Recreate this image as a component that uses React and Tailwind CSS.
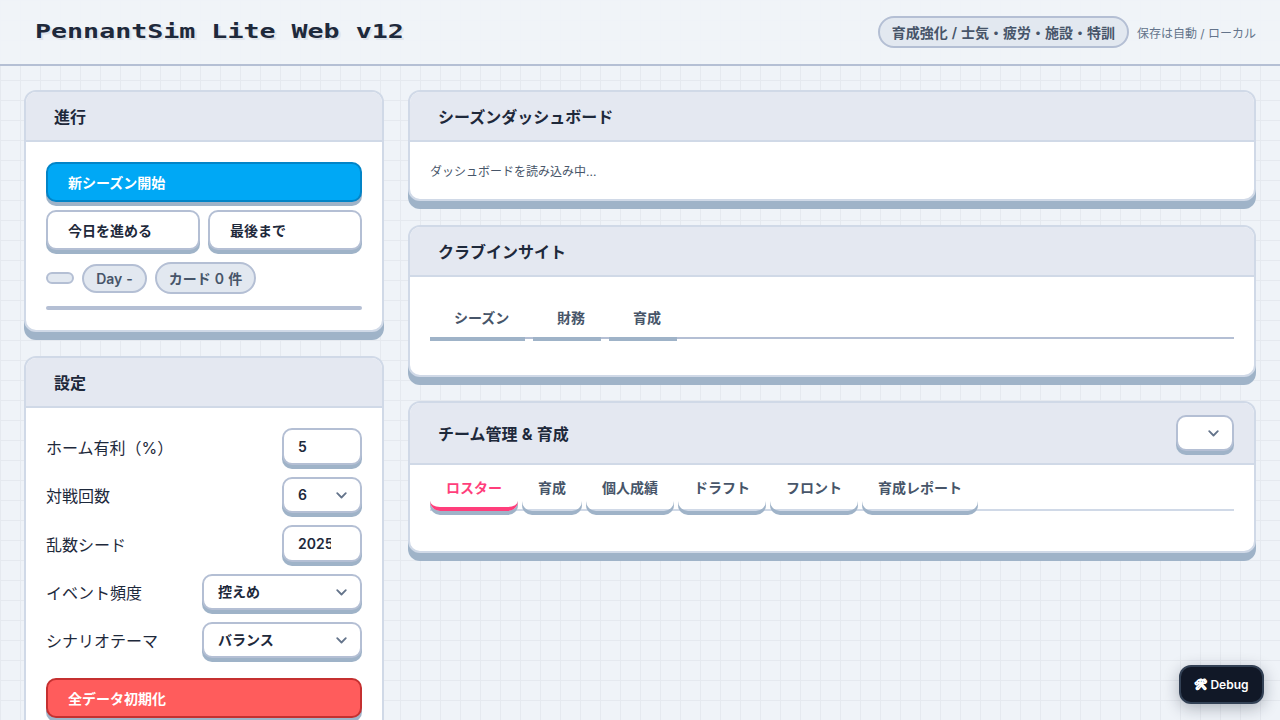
import React from "react";

function Card({ title, action, headerClass = "h-[50px]", className = "", children }) {
  return (
    <section className={`flex flex-col overflow-hidden rounded-xl border-2 border-[#d0d9e7] bg-white shadow-[0_8px_0_#9fb3c8] ${className}`}>
      <div className={`flex shrink-0 items-center justify-between border-b-2 border-[#d0d9e7] bg-[#e4e8f1] pl-7 pr-5 ${headerClass}`}>
        <h2 className="pt-0.5 text-base font-bold [word-spacing:0.5px]">{title}</h2>
        {action}
      </div>
      {children}
    </section>
  );
}

function Button({ children, className }) {
  return (
    <button className={`flex h-10 items-center rounded-[10px] border-2 pl-5 pt-0.5 text-left text-sm font-bold shadow-[0_4px_0_#9fb3c8] ${className}`}>
      {children}
    </button>
  );
}

function Chip({ children, className = "" }) {
  return (
    <span className={`flex items-center justify-center whitespace-nowrap rounded-full border-2 border-[#b4bfd4] bg-[#e2e8f0] text-sm font-semibold text-[#475569] [word-spacing:0.5px] ${className}`}>
      {children}
    </span>
  );
}

function SelectBox({ children, className }) {
  return (
    <div className={`flex h-9 items-center justify-between rounded-[10px] border-2 border-[#b4bfd4] bg-white pl-3.5 pr-2.5 text-sm font-semibold shadow-[0_4px_0_#9fb3c8] ${className}`}>
      <span>{children}</span>
      <svg className="h-4 w-4" viewBox="0 0 16 16" fill="none" stroke="#64748b" strokeWidth="1.8" strokeLinecap="round" strokeLinejoin="round">
        <path d="M3.2 6.2 7.5 10.5 11.8 6.2" />
      </svg>
    </div>
  );
}

function NumberBox({ children }) {
  return (
    <div className="flex h-[37px] w-20 items-center rounded-[10px] border-2 border-[#b4bfd4] bg-white pl-3.5 text-sm font-semibold shadow-[0_4px_0_#9fb3c8]">
      <span className="w-[33px] overflow-hidden">{children}</span>
    </div>
  );
}

function Row({ label, children }) {
  return (
    <div className="flex items-center justify-between">
      <span className="pt-0.5 text-base leading-6">{label}</span>
      {children}
    </div>
  );
}

const insightTabs = [
  { name: "シーズン", width: "w-[95px]" },
  { name: "財務", width: "w-[68px]" },
  { name: "育成", width: "w-[68px]" },
];

const teamTabs = ["ロスター", "育成", "個人成績", "ドラフト", "フロント", "育成レポート"];

export default function App() {
  return (
    <div className="relative h-screen overflow-hidden bg-[#eff3f8] bg-[linear-gradient(to_right,#e5e9ef_1px,transparent_1px),linear-gradient(to_bottom,#e5e9ef_1px,transparent_1px)] bg-[size:20px_20px] font-[Inter,'Noto_Sans_CJK_JP',sans-serif] text-[#1e293b]">
      <header className="flex h-[66px] items-center justify-between border-b-2 border-[#b4bfd4] bg-[#eff3f8]/95 pl-[35px] pr-6">
        <h1 className="origin-left scale-x-[1.388] whitespace-nowrap font-['DejaVu_Sans_Mono',monospace] text-[19.2px] font-bold leading-6 [text-shadow:1.5px_2px_0_#dfe4eb]">PennantSim Lite Web v12</h1>
        <div className="flex items-center gap-2">
          <Chip className="h-8 w-[251px] pt-px">育成強化 / 士気・疲労・施設・特訓</Chip>
          <span className="pt-[3px] text-xs text-[#64748b]">保存は自動 / ローカル</span>
        </div>
      </header>

      <main className="grid grid-cols-[360px_848px] items-start gap-6 px-6 pt-6">
        <div className="flex flex-col gap-6">
          <Card title="進行" className="h-[242px]">
            <div className="flex flex-col p-5">
              <Button className="border-[#0284c7] bg-[#00a8f5] text-white">新シーズン開始</Button>
              <div className="mt-2 grid grid-cols-2 gap-2">
                <Button className="border-[#b4bfd4] bg-white">今日を進める</Button>
                <Button className="border-[#b4bfd4] bg-white">最後まで</Button>
              </div>
              <div className="mt-3 flex h-8 items-center gap-2">
                <Chip className="h-3 w-7" />
                <Chip className="h-[29px] w-[65px] pt-px">Day -</Chip>
                <Chip className="h-8 w-[101px] pt-px">カード 0 件</Chip>
              </div>
              <div className="mt-3 h-1 rounded-full bg-[#b4bfd4]" />
            </div>
          </Card>
          <Card title="設定">
            <div className="flex flex-col gap-3 px-5 pb-6 pt-5">
              <Row label="ホーム有利（%）"><NumberBox>5</NumberBox></Row>
              <Row label="対戦回数"><SelectBox className="w-20">6</SelectBox></Row>
              <Row label="乱数シード"><NumberBox>2025</NumberBox></Row>
              <Row label="イベント頻度"><SelectBox className="w-40">控えめ</SelectBox></Row>
              <Row label="シナリオテーマ"><SelectBox className="w-40">バランス</SelectBox></Row>
              <Button className="mt-2 border-[#c53030] bg-[#ff5c5c] text-white">全データ初期化</Button>
            </div>
          </Card>
        </div>

        <div className="flex flex-col gap-6">
          <Card title="シーズンダッシュボード" className="h-[111px]">
            <p className="px-5 pt-5 text-xs leading-[19px] text-[#475569]">ダッシュボードを読み込み中...</p>
          </Card>
          <Card title="クラブインサイト" className="h-[152px]">
            <div className="mx-5 mt-5 flex gap-2 border-b-2 border-[#b4bfd4]">
              {insightTabs.map((t) => (
                <div key={t.name} className={`flex h-10 items-center pl-6 pt-0.5 text-sm font-semibold text-[#475569] shadow-[0_4px_0_#9fb3c8] ${t.width}`}>{t.name}</div>
              ))}
            </div>
          </Card>
          <Card title="チーム管理 & 育成" headerClass="h-[62px]" className="h-[152px]" action={<SelectBox className="w-[58px]" />}>
            <div className="mx-5 mt-1 flex h-[42px] gap-1 border-b-2 border-[#d0d9e7]">
              {teamTabs.map((t, i) => (
                <div
                  key={t}
                  className={`flex h-[42px] shrink-0 items-center rounded-[10px] border-b-4 px-4 text-sm font-semibold shadow-[0_4px_0_#9fb3c8] ${i === 0 ? "border-[#ff3e7b] text-[#ff3e7b]" : "border-transparent text-[#475569]"}`}
                >
                  {t}
                </div>
              ))}
            </div>
          </Card>
        </div>
      </main>

      <button className="absolute bottom-4 right-4 flex h-[39px] w-[85px] items-center justify-center gap-[3px] whitespace-nowrap rounded-xl border-2 border-[#334155] bg-[#111827] text-xs font-semibold text-white shadow-[0_4px_16px_rgba(15,23,42,0.3)]">
        <span className="text-[10.5px] [-webkit-text-stroke:0.6px_white]">🛠</span>
        <span>Debug</span>
      </button>
    </div>
  );
}
